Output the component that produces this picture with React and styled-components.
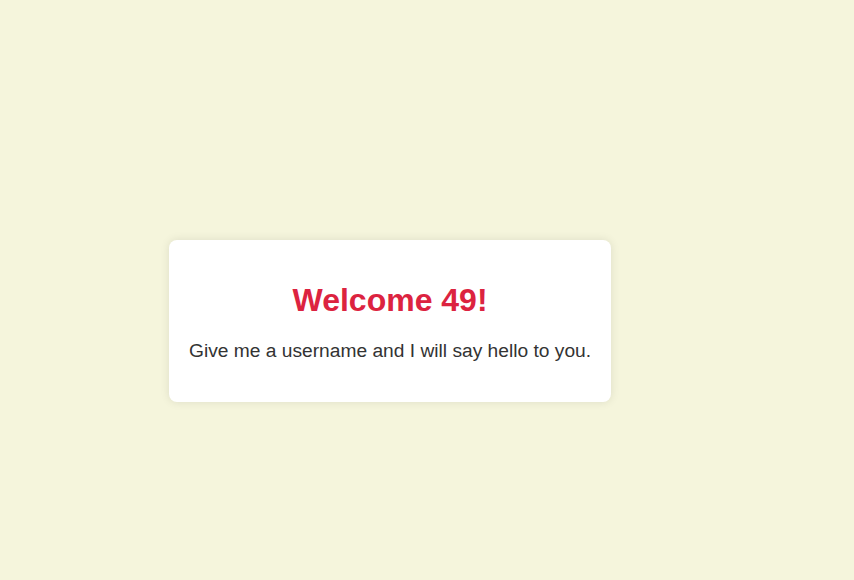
import React from "react";
import styled, { createGlobalStyle } from "styled-components";

const GlobalStyle = createGlobalStyle`
  body {
    margin: 0;
    background-color: #f5f5dc;
    font-family: "Liberation Sans", Arial, sans-serif;
  }
`;

const Page = styled.div`
  min-height: 580px;
  padding: 240px 0 0 169px;
  box-sizing: border-box;
  display: flex;
  align-items: flex-start;
`;

const Card = styled.div`
  background-color: #ffffff;
  padding: 20px 20px 21px 20px;
  border-radius: 8px;
  box-shadow: 0 0 10px rgba(0, 0, 0, 0.1);
  text-align: center;
`;

const Title = styled.h1`
  color: #dc2340;
  font-size: 32px;
  font-weight: bold;
  margin: 21.5px 0;
`;

const Message = styled.p`
  color: #333333;
  font-size: 19.2px;
  margin: 19.2px 0;
`;

function App() {
  return (
    <>
      <GlobalStyle />
      <Page>
        <Card>
          <Title>Welcome 49!</Title>
          <Message>Give me a username and I will say hello to you.</Message>
        </Card>
      </Page>
    </>
  );
}

export default App;
